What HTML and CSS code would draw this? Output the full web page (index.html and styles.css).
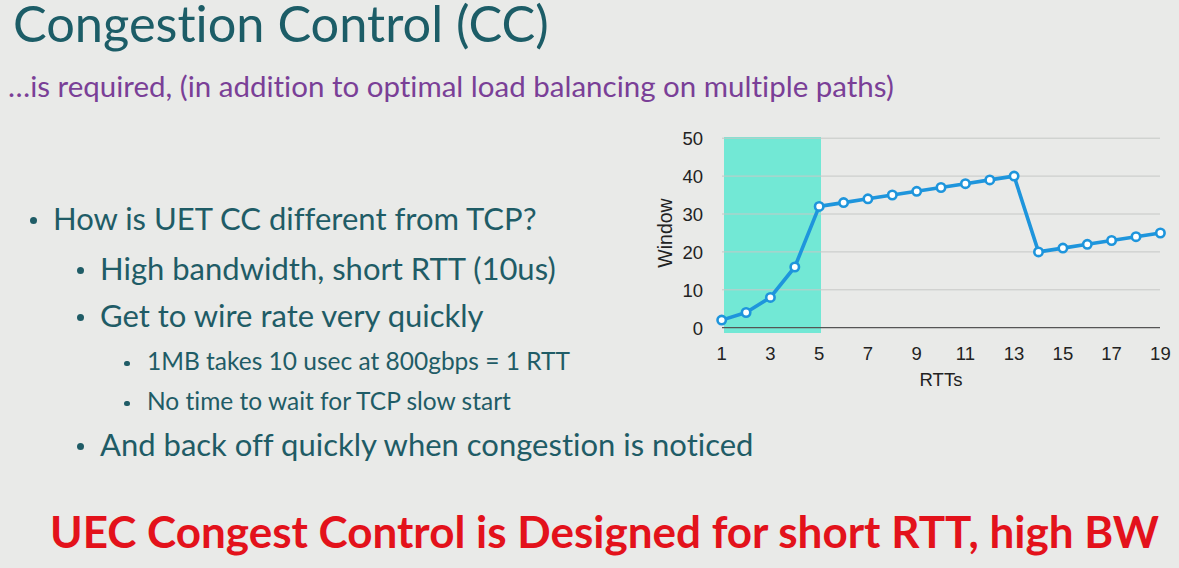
FILE: index.html
```html
<!DOCTYPE html>
<html lang="en">
<head>
<meta charset="utf-8">
<title>Congestion Control (CC)</title>
<link rel="stylesheet" href="styles.css">
</head>
<body>
<div class="slide">
  <header class="head">
    <h1 class="title">Congestion Control (CC)</h1>
    <p class="subtitle">…is required, (in addition to optimal load balancing on multiple paths)</p>
  </header>
  <main class="main">
    <ul class="l1">
      <li class="b1">How is UET CC different from TCP?
        <ul class="l2">
          <li class="b2">High bandwidth, short RTT (10us)</li>
          <li class="b2">Get to wire rate very quickly
            <ul class="l3">
              <li class="b3">1MB takes 10 usec at 800gbps = 1 RTT</li>
              <li class="b3">No time to wait for TCP slow start</li>
            </ul>
          </li>
          <li class="b2">And back off quickly when congestion is noticed</li>
        </ul>
      </li>
    </ul>
    <svg class="chart" width="529" height="270" viewBox="0 0 529 270">
      <rect class="phase" x="74" y="12" width="97" height="196"/>
      <g class="grid">
        <line x1="72" y1="13.2" x2="510" y2="13.2"/>
        <line x1="72" y1="51.1" x2="510" y2="51.1"/>
        <line x1="72" y1="89.0" x2="510" y2="89.0"/>
        <line x1="72" y1="126.9" x2="510" y2="126.9"/>
        <line x1="72" y1="164.8" x2="510" y2="164.8"/>
      </g>
      <line class="base" x1="72" y1="202.7" x2="510" y2="202.7"/>
      <g class="ylab">
        <text x="53" y="20">50</text>
        <text x="53" y="57.9">40</text>
        <text x="53" y="95.8">30</text>
        <text x="53" y="133.7">20</text>
        <text x="53" y="171.6">10</text>
        <text x="53" y="209.5">0</text>
      </g>
      <g class="xlab">
        <text x="71.7" y="235">1</text>
        <text x="120.4" y="235">3</text>
        <text x="169.2" y="235">5</text>
        <text x="217.9" y="235">7</text>
        <text x="266.7" y="235">9</text>
        <text x="315.4" y="235">11</text>
        <text x="364.1" y="235">13</text>
        <text x="412.9" y="235">15</text>
        <text x="461.6" y="235">17</text>
        <text x="510.4" y="235">19</text>
      </g>
      <text class="axis" x="291" y="261">RTTs</text>
      <text class="axis wlab" transform="translate(22 108) rotate(-90)">Window</text>
      <polyline class="series" points="71.7,195.1 96.1,187.5 120.4,172.4 144.8,142.0 169.2,81.4 193.6,77.6 217.9,73.8 242.3,70.0 266.7,66.3 291.0,62.5 315.4,58.7 339.8,54.9 364.1,51.1 388.5,126.9 412.9,123.1 437.3,119.3 461.6,115.5 486.0,111.7 510.4,108.0"/>
      <g class="dots">
        <circle cx="71.7" cy="195.1" r="4.2"/>
        <circle cx="96.1" cy="187.5" r="4.2"/>
        <circle cx="120.4" cy="172.4" r="4.2"/>
        <circle cx="144.8" cy="142.0" r="4.2"/>
        <circle cx="169.2" cy="81.4" r="4.2"/>
        <circle cx="193.6" cy="77.6" r="4.2"/>
        <circle cx="217.9" cy="73.8" r="4.2"/>
        <circle cx="242.3" cy="70.0" r="4.2"/>
        <circle cx="266.7" cy="66.3" r="4.2"/>
        <circle cx="291.0" cy="62.5" r="4.2"/>
        <circle cx="315.4" cy="58.7" r="4.2"/>
        <circle cx="339.8" cy="54.9" r="4.2"/>
        <circle cx="364.1" cy="51.1" r="4.2"/>
        <circle cx="388.5" cy="126.9" r="4.2"/>
        <circle cx="412.9" cy="123.1" r="4.2"/>
        <circle cx="437.3" cy="119.3" r="4.2"/>
        <circle cx="461.6" cy="115.5" r="4.2"/>
        <circle cx="486.0" cy="111.7" r="4.2"/>
        <circle cx="510.4" cy="108.0" r="4.2"/>
      </g>
    </svg>
  </main>
  <footer class="foot">UEC Congest Control is Designed for short RTT, high BW</footer>
</div>
</body>
</html>
```

FILE: styles.css
```css
html, body {
  margin: 0;
  padding: 0;
}
body {
  background: #e9eae8;
  font-family: Lato, "Open Sans", "Liberation Sans", sans-serif;
  font-variant-ligatures: none;
  width: 1179px;
  height: 568px;
  overflow: hidden;
}
.slide {
  width: 1179px;
  height: 568px;
  display: flex;
  flex-direction: column;
}
.head {
  padding-left: 13px;
}
.title {
  margin: 0;
  font-weight: 400;
  font-size: 50.5px;
  line-height: 46px;
  height: 46px;
  color: #1c5d67;
}
.subtitle {
  margin: 25px 0 0 -5px;
  font-size: 29.5px;
  line-height: 30px;
  color: #7a3f97;
  white-space: nowrap;
}
.main {
  margin-top: 24px;
  display: flex;
  justify-content: space-between;
  height: 330px;
}
ul {
  list-style: none;
  margin: 0;
  padding: 0;
}
.l1 {
  flex: none;
  width: 590px;
  padding: 75px 0 0 53px;
  color: #1f5c66;
  white-space: nowrap;
}
.b1, .b2 {
  font-size: 31px;
  line-height: 36px;
  position: relative;
}
.b3 {
  font-size: 24.5px;
  line-height: 28px;
  position: relative;
}
.b1::before, .b2::before, .b3::before {
  content: "";
  position: absolute;
  border-radius: 50%;
  background: currentColor;
}
.b1::before, .b2::before {
  width: 7px;
  height: 7px;
  left: -23px;
  top: 17px;
}
.b3::before {
  width: 5.5px;
  height: 5.5px;
  left: -23px;
  top: 13.5px;
}
.l2 {
  margin: 14px 0 0 47px;
  display: flex;
  flex-direction: column;
  gap: 11px;
}
.l3 {
  margin: 14px 0 0 47px;
  display: flex;
  flex-direction: column;
  gap: 12px;
}
.chart {
  display: block;
  flex: none;
}
.phase { fill: #72e8d5; }
.grid line { stroke: #c6c8c6; stroke-width: 1; }
.base { stroke: #555; stroke-width: 1.3; }
.ylab text, .xlab text, .axis {
  font-family: "Liberation Sans", Arial, sans-serif;
  font-size: 18.5px;
  fill: #222;
}
.ylab text { text-anchor: end; }
.xlab text { text-anchor: middle; }
.axis { text-anchor: middle; }
.wlab { font-size: 19.5px; }
.series {
  fill: none;
  stroke: #1e95dc;
  stroke-width: 3.6;
  stroke-linejoin: round;
}
.dots circle {
  fill: #ffffff;
  stroke: #1e95dc;
  stroke-width: 2.6;
}
.foot {
  margin-top: auto;
  padding: 0 0 13px 50px;
  font-size: 44px;
  font-weight: 700;
  line-height: 48px;
  color: #e3121b;
  white-space: nowrap;
}
```
